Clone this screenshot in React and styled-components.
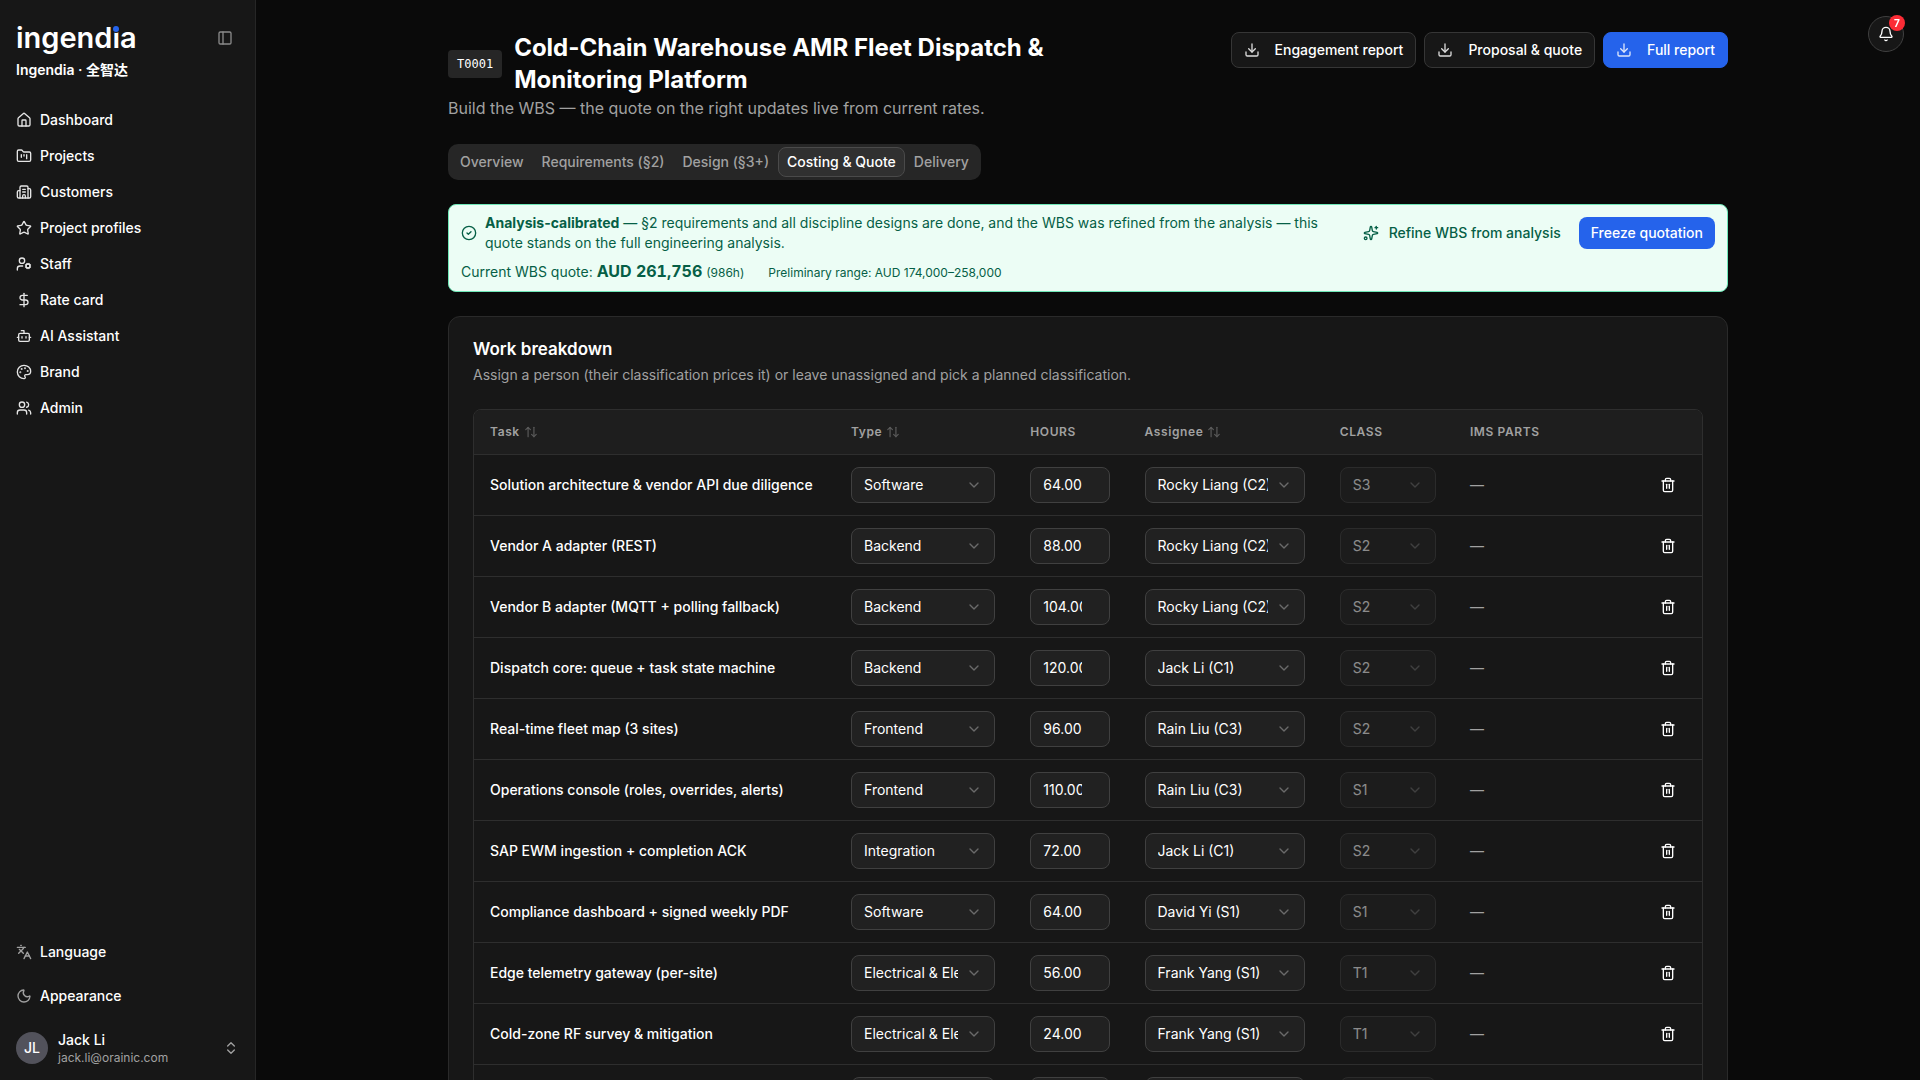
import styled, { createGlobalStyle } from "styled-components";
import {
  House,
  FolderKanban,
  Building2,
  Star,
  UserCog,
  DollarSign,
  Bot,
  Palette,
  Users,
  Languages,
  Moon,
  ChevronsUpDown,
  ChevronDown,
  PanelLeft,
  Bell,
  ArrowUpDown,
  Sparkles,
  Download,
  Trash2,
  CircleCheck,
} from "lucide-react";

const GlobalStyle = createGlobalStyle`
  * {
    box-sizing: border-box;
  }
  body {
    margin: 0;
    background: #0a0a0a;
    color: #fff;
    color-scheme: dark;
    font-family: Inter, "Noto Sans CJK SC", sans-serif;
    font-size: 14px;
    line-height: 20px;
  }
  h1, h2, p {
    margin: 0;
  }
  button, input, select {
    font: inherit;
    color: inherit;
  }
  button {
    cursor: pointer;
  }
`;

const Shell = styled.div`
  display: grid;
  grid-template-columns: 256px minmax(0, 1fr);
  height: 100vh;
`;

/* sidebar */
const Sidebar = styled.aside`
  display: flex;
  flex-direction: column;
  padding: 16px 16px 12px;
  background: #171717;
  border-right: 1px solid #262626;
`;
const Brand = styled.div`
  display: flex;
  justify-content: space-between;
  align-items: center;
  height: 44px;
`;
const Logo = styled.a`
  color: #fff;
  text-decoration: none;
  font-size: 29px;
  font-weight: 600;
  line-height: 40px;
`;
const LogoI = styled.span`
  position: relative;

  &::after {
    content: "";
    position: absolute;
    left: 1px;
    top: 6px;
    width: 6px;
    height: 6px;
    border-radius: 50%;
    background: #2563eb;
    box-shadow: 0 0 0 1px #171717;
  }
`;
const BrandName = styled.div`
  font-weight: 600;
`;
const IconButton = styled.button`
  display: flex;
  align-items: center;
  justify-content: center;
  width: 28px;
  height: 28px;
  padding: 0;
  border: 0;
  background: none;
  color: ${(props) => (props.$muted ? "#8a8a8a" : "#fff")};
`;
const Nav = styled.nav`
  display: flex;
  flex-direction: column;
  gap: 4px;
  margin-top: 24px;
`;
const NavItem = styled.a`
  display: flex;
  align-items: center;
  gap: 8px;
  height: 32px;
  color: #fff;
  font-weight: 500;
  text-decoration: none;

  svg {
    color: #e5e5e5;
  }
`;
const Spacer = styled.div`
  flex: 1;
`;
const Menu = styled.div`
  display: flex;
  flex-direction: column;
  gap: 12px;
`;
const MenuButton = styled.button`
  display: flex;
  align-items: center;
  gap: 8px;
  height: 32px;
  padding: 0;
  border: 0;
  background: none;
  font-weight: 500;

  svg {
    color: #a1a1a1;
  }
`;
const Profile = styled.button`
  display: flex;
  align-items: center;
  gap: 10px;
  margin-top: 16px;
  height: 40px;
  padding: 0;
  border: 0;
  background: none;
  text-align: left;

  svg {
    margin-left: auto;
    color: #a1a1a1;
  }
`;
const Avatar = styled.span`
  display: flex;
  align-items: center;
  justify-content: center;
  width: 32px;
  height: 32px;
  border-radius: 50%;
  background: #52525b;
  font-weight: 500;
`;
const ProfileName = styled.span`
  display: block;
  font-weight: 500;
  line-height: 20px;
`;
const ProfileMail = styled.span`
  display: block;
  color: #a1a1a1;
  font-size: 12px;
  line-height: 16px;
`;

/* page */
const Main = styled.main`
  overflow-y: auto;
  scrollbar-width: none;
  padding: 32px;
`;
const Content = styled.div`
  display: flex;
  flex-direction: column;
  gap: 24px;
  max-width: 1280px;
  margin: 0 auto;
`;
const Notify = styled.button`
  position: fixed;
  top: 16px;
  right: 16px;
  display: flex;
  align-items: center;
  justify-content: center;
  width: 36px;
  height: 36px;
  padding: 0;
  border: 1px solid #404040;
  border-radius: 50%;
  background: #171717;
`;
const NotifyCount = styled.span`
  position: absolute;
  top: -2px;
  right: -2px;
  min-width: 16px;
  height: 16px;
  border-radius: 8px;
  background: #fb2c36;
  font-size: 10px;
  font-weight: 700;
  line-height: 16px;
  text-align: center;
`;
const Header = styled.header`
  display: flex;
  justify-content: space-between;
  align-items: flex-start;
  gap: 16px;
`;
const Heading = styled.div`
  max-width: 672px;
`;
const TitleRow = styled.div`
  display: flex;
  align-items: center;
  gap: 12px;
`;
const Code = styled.span`
  padding: 4px 9px;
  border-radius: 4px;
  background: #262626;
  font-family: "DejaVu Sans Mono", monospace;
  font-size: 12px;
  line-height: 20px;
`;
const Title = styled.h1`
  font-size: 24px;
  font-weight: 700;
  line-height: 32px;
`;
const Lead = styled.p`
  color: #a1a1a1;
  font-size: 16px;
  line-height: 24px;
`;
const Actions = styled.div`
  display: flex;
  flex-shrink: 0;
  gap: 8px;
`;
const Button = styled.button`
  display: flex;
  align-items: center;
  gap: 15px;
  height: 36px;
  padding: 0 12px;
  border: 1px solid ${(props) => (props.$primary ? "#2563eb" : "#363636")};
  border-radius: 8px;
  background: ${(props) => (props.$primary ? "#2563eb" : "#171717")};
  font-weight: 500;
  white-space: nowrap;

  svg {
    opacity: 0.85;
  }
`;
const Tabs = styled.div`
  display: flex;
  align-self: flex-start;
  padding: 3px;
  border-radius: 10px;
  background: #262626;
`;
const Tab = styled.button`
  height: 30px;
  padding: 0 8px;
  border: 1px solid ${(props) => (props.$active ? "#4a4a4a" : "transparent")};
  border-radius: 8px;
  background: ${(props) => (props.$active ? "#303030" : "transparent")};
  color: ${(props) => (props.$active ? "#fff" : "#a1a1a1")};
  font-weight: 500;
`;

/* quote banner */
const Banner = styled.section`
  padding: 8px 12px;
  border: 1px solid #6ee7b7;
  border-radius: 8px;
  background: #ecfdf5;
  color: #065f46;
`;
const BannerTop = styled.div`
  display: flex;
  align-items: center;
  gap: 8px;

  & > svg {
    flex-shrink: 0;
  }
`;
const BannerText = styled.p`
  flex: 1;
`;
const SmallButton = styled.button`
  display: flex;
  align-items: center;
  flex-shrink: 0;
  gap: 10px;
  height: 32px;
  padding: 0 ${(props) => (props.$primary ? "12px" : "10px")};
  border: 0;
  border-radius: 8px;
  background: ${(props) => (props.$primary ? "#2563eb" : "none")};
  color: ${(props) => (props.$primary ? "#fff" : "#065f46")};
  font-weight: 500;
`;
const BannerQuote = styled.div`
  display: flex;
  align-items: baseline;
  gap: 24px;
  margin-top: 8px;
`;
const Amount = styled.strong`
  font-size: 16px;
  font-weight: 700;
  font-variant-numeric: tabular-nums;
`;
const Small = styled.span`
  font-size: 12px;
`;

/* work breakdown */
const Card = styled.section`
  padding: 20px 24px 24px;
  border: 1px solid #2a2a2a;
  border-radius: 12px;
  background: #171717;
`;
const CardTitle = styled.h2`
  font-size: 17px;
  font-weight: 600;
  line-height: 24px;
`;
const CardLead = styled.p`
  margin-top: 4px;
  color: #a1a1a1;
`;
const TableWrap = styled.div`
  margin-top: 24px;
  border: 1px solid #2e2e2e;
  border-radius: 8px;
  overflow: hidden;
`;
const Table = styled.table`
  width: 100%;
  table-layout: fixed;
  border-collapse: separate;
  border-spacing: 0;
`;
const Th = styled.th`
  width: ${(props) => props.$width};
  height: 45px;
  padding: 0 16px;
  border-bottom: 1px solid #2e2e2e;
  background: #1e1e1e;
  color: #a1a1a1;
  font-size: 12px;
  font-weight: 600;
  letter-spacing: 0.6px;
  text-align: left;
`;
const SortButton = styled.button`
  display: flex;
  align-items: center;
  gap: 4px;
  padding: 0;
  border: 0;
  background: none;
  letter-spacing: inherit;

  svg {
    color: #5a5a5a;
  }
`;
const Td = styled.td`
  padding: 12px 16px;
  border-bottom: 1px solid #2e2e2e;
  color: ${(props) => (props.$muted ? "#a1a1a1" : "#fff")};
  font-weight: ${(props) => (props.$muted ? 400 : 500)};
  white-space: nowrap;
`;
const Hours = styled.input`
  display: block;
  width: 80px;
  height: 36px;
  padding: 0 12px 2px;
  border: 1px solid #404040;
  border-radius: 8px;
  background: #212121;
  font-weight: 400;
`;
const SelectWrap = styled.div`
  position: relative;
  width: ${(props) => props.$width};
  opacity: ${(props) => (props.$disabled ? 0.5 : 1)};

  svg {
    position: absolute;
    top: 10px;
    right: 13px;
    color: #6a6a6a;
    pointer-events: none;
  }
`;
const Select = styled.select`
  appearance: none;
  display: block;
  width: 100%;
  height: 36px;
  padding: 0 36px 0 12px;
  border: 1px solid #404040;
  border-radius: 8px;
  background: #212121;
  color: #fff;
  font-weight: 400;
  opacity: 1;
`;

const navItems = [
  { label: "Dashboard", icon: House },
  { label: "Projects", icon: FolderKanban },
  { label: "Customers", icon: Building2 },
  { label: "Project profiles", icon: Star },
  { label: "Staff", icon: UserCog },
  { label: "Rate card", icon: DollarSign },
  { label: "AI Assistant", icon: Bot },
  { label: "Brand", icon: Palette },
  { label: "Admin", icon: Users },
];

const tabs = ["Overview", "Requirements (§2)", "Design (§3+)", "Costing & Quote", "Delivery"];

const columns = [
  { label: "Task", width: "29.4%", sortable: true },
  { label: "Type", width: "14.6%", sortable: true },
  { label: "HOURS", width: "9.3%" },
  { label: "Assignee", width: "15.9%", sortable: true },
  { label: "CLASS", width: "10.6%" },
  { label: "IMS PARTS", width: "15%" },
  { label: "", width: "5.2%" },
];

const rows = [
  { task: "Solution architecture & vendor API due diligence", type: "Software", hours: "64.00", assignee: "Rocky Liang (C2)", level: "S3" },
  { task: "Vendor A adapter (REST)", type: "Backend", hours: "88.00", assignee: "Rocky Liang (C2)", level: "S2" },
  { task: "Vendor B adapter (MQTT + polling fallback)", type: "Backend", hours: "104.00", assignee: "Rocky Liang (C2)", level: "S2" },
  { task: "Dispatch core: queue + task state machine", type: "Backend", hours: "120.00", assignee: "Jack Li (C1)", level: "S2" },
  { task: "Real-time fleet map (3 sites)", type: "Frontend", hours: "96.00", assignee: "Rain Liu (C3)", level: "S2" },
  { task: "Operations console (roles, overrides, alerts)", type: "Frontend", hours: "110.00", assignee: "Rain Liu (C3)", level: "S1" },
  { task: "SAP EWM ingestion + completion ACK", type: "Integration", hours: "72.00", assignee: "Jack Li (C1)", level: "S2" },
  { task: "Compliance dashboard + signed weekly PDF", type: "Software", hours: "64.00", assignee: "David Yi (S1)", level: "S1" },
  { task: "Edge telemetry gateway (per-site)", type: "Electrical & Electronic", hours: "56.00", assignee: "Frank Yang (S1)", level: "T1" },
  { task: "Cold-zone RF survey & mitigation", type: "Electrical & Electronic", hours: "24.00", assignee: "Frank Yang (S1)", level: "T1" },
  { task: "", type: "", hours: "", assignee: "", level: "" },
];

const SelectField = ({ label, value, width, disabled }) => (
  <SelectWrap $width={width} $disabled={disabled}>
    <Select aria-label={label} defaultValue={value} disabled={disabled}>
      <option>{value}</option>
    </Select>
    <ChevronDown size={16} strokeWidth={2} />
  </SelectWrap>
);

const SideNav = () => (
  <Sidebar>
    <Brand>
      <Logo href="#">
        ingend<LogoI>i</LogoI>a
      </Logo>
      <IconButton $muted aria-label="Toggle sidebar">
        <PanelLeft size={16} />
      </IconButton>
    </Brand>
    <BrandName>Ingendia · 全智达</BrandName>
    <Nav>
      {navItems.map(({ label, icon: Icon }) => (
        <NavItem href="#" key={label}>
          <Icon size={16} />
          {label}
        </NavItem>
      ))}
    </Nav>
    <Spacer />
    <Menu>
      <MenuButton>
        <Languages size={16} />
        Language
      </MenuButton>
      <MenuButton>
        <Moon size={16} />
        Appearance
      </MenuButton>
    </Menu>
    <Profile>
      <Avatar>JL</Avatar>
      <span>
        <ProfileName>Jack Li</ProfileName>
        <ProfileMail>jack.li@orainic.com</ProfileMail>
      </span>
      <ChevronsUpDown size={16} />
    </Profile>
  </Sidebar>
);

const QuoteBanner = () => (
  <Banner>
    <BannerTop>
      <CircleCheck size={16} />
      <BannerText>
        <b>Analysis-calibrated</b> — §2 requirements and all discipline designs are done, and the WBS was refined from
        the analysis — this quote stands on the full engineering analysis.
      </BannerText>
      <SmallButton>
        <Sparkles size={16} />
        Refine WBS from analysis
      </SmallButton>
      <SmallButton $primary>Freeze quotation</SmallButton>
    </BannerTop>
    <BannerQuote>
      <span>
        Current WBS quote: <Amount>AUD 261,756</Amount> <Small>(986h)</Small>
      </span>
      <Small>Preliminary range: AUD 174,000–258,000</Small>
    </BannerQuote>
  </Banner>
);

const WorkBreakdown = () => (
  <Card>
    <CardTitle>Work breakdown</CardTitle>
    <CardLead>
      Assign a person (their classification prices it) or leave unassigned and pick a planned classification.
    </CardLead>
    <TableWrap>
      <Table>
        <thead>
          <tr>
            {columns.map((col) => (
              <Th key={col.label} $width={col.width}>
                {col.sortable ? (
                  <SortButton>
                    {col.label}
                    <ArrowUpDown size={14} />
                  </SortButton>
                ) : (
                  col.label
                )}
              </Th>
            ))}
          </tr>
        </thead>
        <tbody>
          {rows.map((row) => (
            <tr key={row.task}>
              <Td>{row.task}</Td>
              <Td>
                <SelectField label="Type" value={row.type} width="144px" />
              </Td>
              <Td>
                <Hours type="number" aria-label="Hours" defaultValue={row.hours} step="0.01" />
              </Td>
              <Td>
                <SelectField label="Assignee" value={row.assignee} width="160px" />
              </Td>
              <Td>
                <SelectField label="Class" value={row.level} width="96px" disabled />
              </Td>
              <Td $muted>{row.task && "—"}</Td>
              <Td>
                <IconButton aria-label="Delete task">
                  <Trash2 size={16} />
                </IconButton>
              </Td>
            </tr>
          ))}
        </tbody>
      </Table>
    </TableWrap>
  </Card>
);

const App = () => {
  return (
    <Shell>
      <GlobalStyle />
      <SideNav />
      <Main>
        <Content>
          <Header>
            <Heading>
              <TitleRow>
                <Code>T0001</Code>
                <Title>Cold-Chain Warehouse AMR Fleet Dispatch & Monitoring Platform</Title>
              </TitleRow>
              <Lead>Build the WBS — the quote on the right updates live from current rates.</Lead>
            </Heading>
            <Actions>
              <Button>
                <Download size={16} />
                Engagement report
              </Button>
              <Button>
                <Download size={16} />
                Proposal & quote
              </Button>
              <Button $primary>
                <Download size={16} />
                Full report
              </Button>
            </Actions>
          </Header>
          <Tabs>
            {tabs.map((tab) => (
              <Tab key={tab} $active={tab === "Costing & Quote"}>
                {tab}
              </Tab>
            ))}
          </Tabs>
          <QuoteBanner />
          <WorkBreakdown />
        </Content>
      </Main>
      <Notify aria-label="Notifications">
        <Bell size={16} />
        <NotifyCount>7</NotifyCount>
      </Notify>
    </Shell>
  );
};

export default App;
